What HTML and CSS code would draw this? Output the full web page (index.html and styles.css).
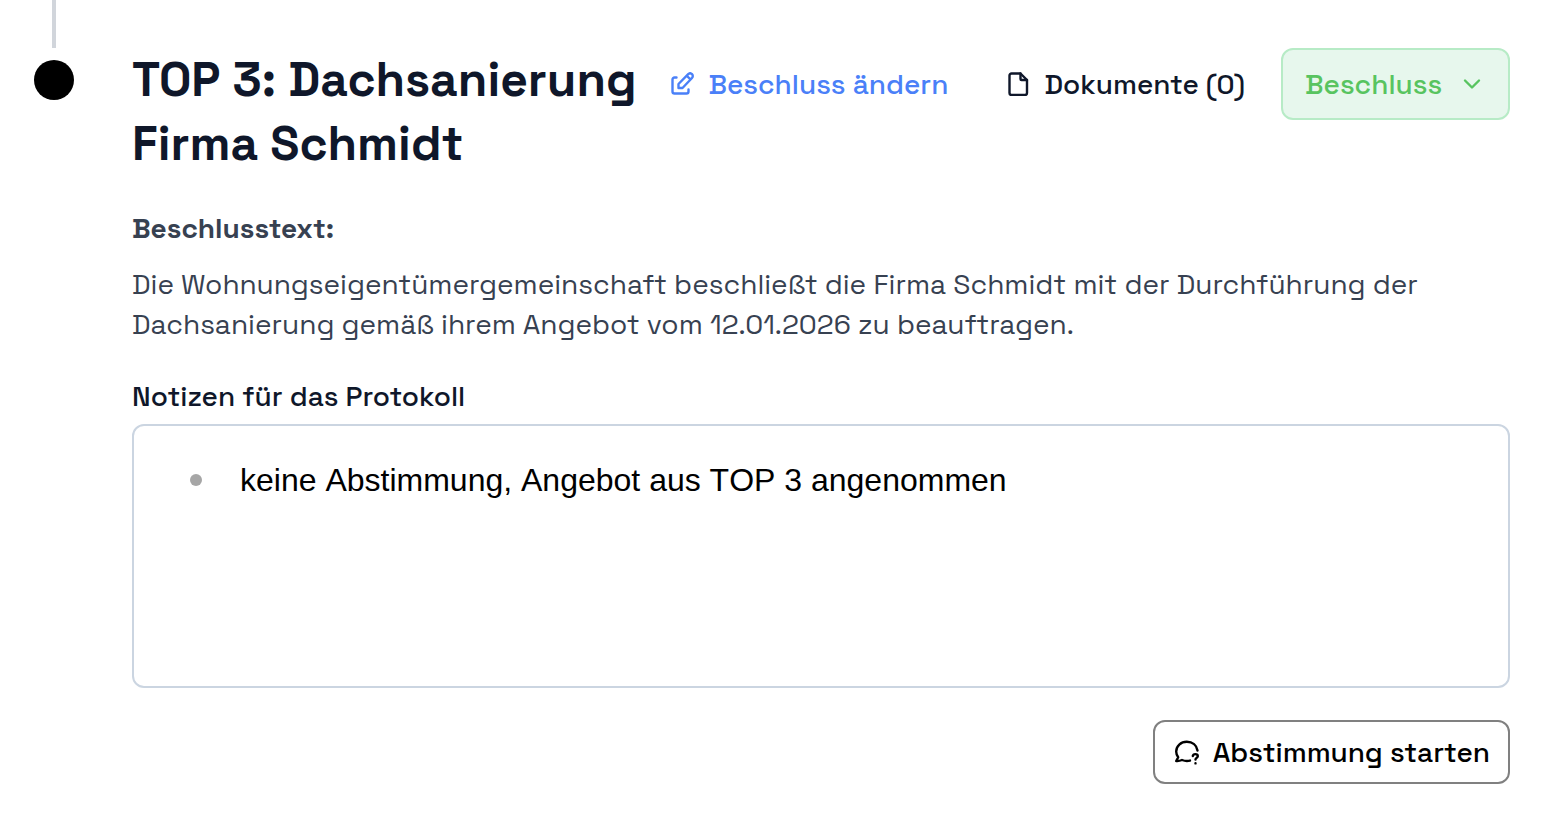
FILE: index.html
```html
<!DOCTYPE html>
<html lang="de">
<head>
  <meta charset="utf-8">
  <meta name="viewport" content="width=device-width">
  <title>TOP 3: Dachsanierung Firma Schmidt</title>
  <link rel="stylesheet" href="styles.css">
</head>
<body>

  <article class="item">
    <div class="timeline">
      <div class="line"></div>
      <div class="dot"></div>
    </div>

    <div class="content">
      <header class="head">
        <h2>TOP 3: Dachsanierung Firma Schmidt</h2>
        <button type="button" class="link edit">
          <svg width="24" height="24" viewBox="0 0 24 24" aria-hidden="true">
            <path d="M6.500 5.500H4.500A2 2 0 0 0 2.500 7.500V19.500a2 2 0 0 0 2 2H16.500a2 2 0 0 0 2-2v-2"/>
            <path d="M8.500 16v-4L18.200 2.200a2.600 2.600 0 0 1 3.800 3.800L12.500 16zM17 4l3.200 3.200"/>
          </svg>
          Beschluss ändern
        </button>
        <button type="button" class="link docs">
          <svg width="24" height="24" viewBox="0 0 24 24" aria-hidden="true">
            <path d="M14.500 1.500H5.500a2 2 0 0 0-2 2v17.500a2 2 0 0 0 2 2h13.500a2 2 0 0 0 2-2V8z"/>
            <path d="M14.500 1.500V7a1 1 0 0 0 1 1H21"/>
          </svg>
          Dokumente (0)
        </button>
        <div class="type">
          <select aria-label="Art des Tagesordnungspunkts">
            <option>Beschluss</option>
          </select>
          <svg width="20" height="20" viewBox="0 0 20 20" aria-hidden="true">
            <path d="M3 6.500l7 7 7-7"/>
          </svg>
        </div>
      </header>

      <h3>Beschlusstext:</h3>
      <p>Die Wohnungseigentümergemeinschaft beschließt die Firma Schmidt mit der Durchführung der Dachsanierung gemäß ihrem Angebot vom 12.01.2026 zu beauftragen.</p>

      <div class="label" id="notes-label">Notizen für das Protokoll</div>
      <div class="editor" contenteditable="true" role="textbox" aria-multiline="true" aria-labelledby="notes-label" spellcheck="false">
        <ul>
          <li>keine Abstimmung, Angebot aus TOP 3 angenommen</li>
        </ul>
      </div>

      <div class="foot">
        <button type="button" class="start">
          <svg width="26" height="26" viewBox="0 0 26 26" aria-hidden="true">
            <path d="M23.500 11.500C22.700 6 18.500 2.800 12.800 2.800 6.800 2.800 2.200 7 2.200 12.500c0 2.300.8 4.200 2 5.800L2.200 22c2.500.2 4.300-.3 5.800-1 2.500 1 5.500 1.300 8 .6"/>
            <path d="M18.800 17c.2-1.200 1.200-1.900 2.500-1.900 1.500 0 2.500.9 2.500 2.100 0 1.600-2.300 1.800-2.300 3.400M21.500 24.300v.1"/>
          </svg>
          Abstimmung starten
        </button>
      </div>
    </div>
  </article>

</body>
</html>
```
FILE: styles.css
```css
* {
  box-sizing: border-box;
}
body {
  margin: 0;
  background: #fff;
  color: #0f172a;
  font-family: "Space Grotesk", Inter, sans-serif;
  font-size: 28px;
  line-height: 40px;
}
h2, h3, p, ul {
  margin: 0;
}
svg {
  flex: none;
  fill: none;
  stroke: currentColor;
  stroke-width: 2.4;
  stroke-linecap: round;
  stroke-linejoin: round;
}
button, select {
  font: inherit;
  font-weight: 500;
  cursor: pointer;
}
.item {
  display: flex;
  padding-right: 32px;
}
.timeline {
  display: flex;
  flex-direction: column;
  align-items: center;
  gap: 12px;
  width: 108px;
  margin-right: 24px;
  flex: none;
}
.line {
  width: 4px;
  height: 48px;
  background: #d1d5db;
}
.dot {
  width: 40px;
  height: 40px;
  border-radius: 50%;
  background: #000;
}
.content {
  flex: 1;
  min-width: 0;
  padding: 48px 0;
}
.head {
  display: flex;
  align-items: flex-start;
  margin-bottom: 32px;
}
h2 {
  flex: 1;
  font-size: 48px;
  line-height: 64px;
  font-weight: 700;
}
.link {
  display: flex;
  align-items: center;
  gap: 14px;
  height: 72px;
  padding: 0;
  border: 0;
  background: none;
  color: inherit;
  white-space: nowrap;
}
.edit {
  margin-right: 58px;
  color: #4a80f8;
}
.docs {
  margin-right: 36px;
}
.type {
  position: relative;
  color: #58c460;
}
.type select {
  appearance: none;
  height: 72px;
  padding: 0 65px 0 22px;
  border: 2px solid #b7ebc6;
  border-radius: 12px;
  background: #e7f7ed;
  color: inherit;
}
.type svg {
  position: absolute;
  right: 28px;
  top: 26px;
  pointer-events: none;
}
h3 {
  margin-bottom: 16px;
  font-size: 28px;
  font-weight: 700;
  color: #374151;
}
p {
  margin-bottom: 32px;
  color: #374151;
}
.label {
  margin-bottom: 8px;
  font-weight: 500;
}
.editor {
  min-height: 264px;
  padding: 32px 54px;
  border: 2px solid #cbd5e1;
  border-radius: 12px;
  color: #000;
  font-family: "Liberation Sans", Arial, sans-serif;
  font-size: 32px;
  font-kerning: none;
  line-height: 44px;
}
.editor ul {
  padding: 0;
  list-style: none;
}
.editor li {
  display: flex;
  align-items: center;
  gap: 38px;
}
.editor li::before {
  content: "";
  width: 12px;
  height: 12px;
  margin-left: 2px;
  border-radius: 50%;
  background: #a6a6a6;
}
.foot {
  display: flex;
  justify-content: flex-end;
  margin-top: 32px;
}
.start {
  display: flex;
  align-items: center;
  gap: 13px;
  height: 64px;
  padding: 0 18px 0 19px;
  border: 2px solid #808080;
  border-radius: 12px;
  background: #fff;
  color: #000;
}
```
